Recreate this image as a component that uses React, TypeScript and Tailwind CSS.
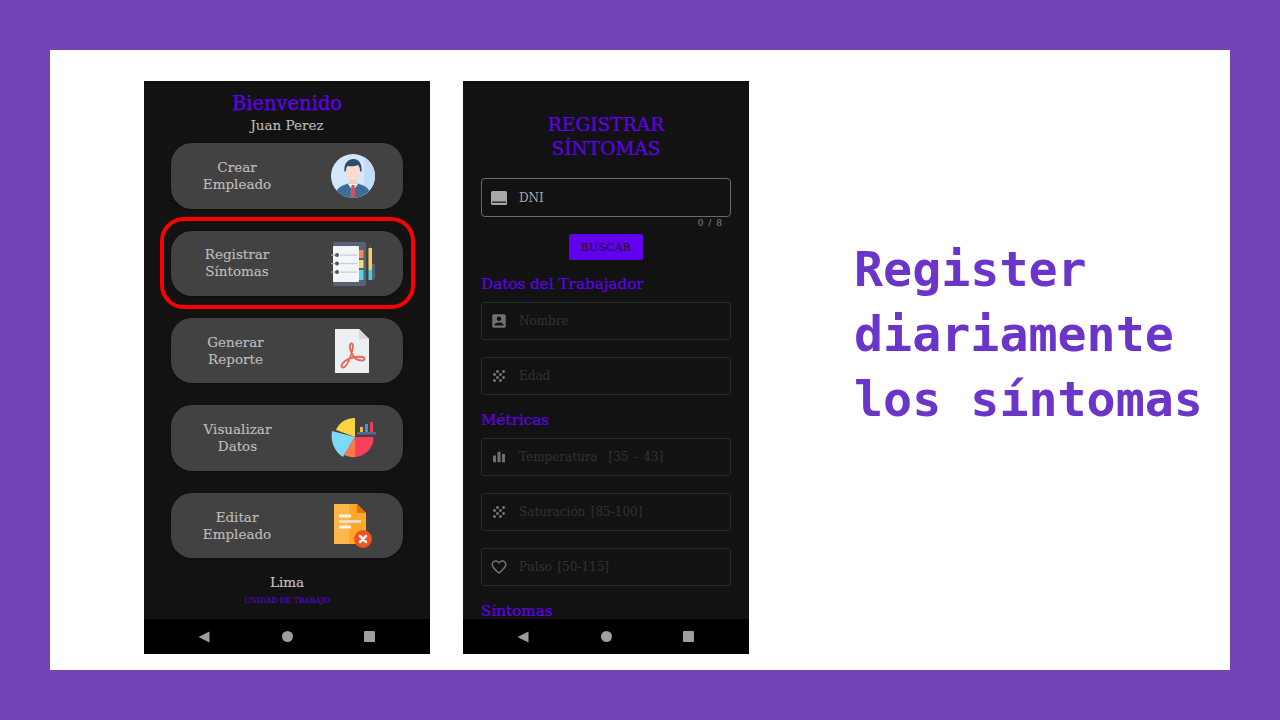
const serif = "font-['DejaVu_Serif','Liberation_Serif',serif]";

function AvatarIcon() {
  return (
    <svg width="46" height="46" viewBox="0 0 46 46">
      <defs>
        <clipPath id="avatar-clip">
          <circle cx="23" cy="23" r="22" />
        </clipPath>
      </defs>
      <circle cx="23" cy="23" r="22" fill="#d3e6fb" />
      <g clipPath="url(#avatar-clip)">
        <path d="M34 3a22 22 0 0 1 0 40z" fill="#c2dbf6" />
        <path d="M5 46c0-10 5-13 12-15l6-2 6 2c7 2 12 5 12 15z" fill="#3f6d9a" />
        <path d="M18 31l5-3 5 3-5 7z" fill="#f4f6f8" />
        <path d="M21.500 32h3l1 10-2.500 4-2.500-4z" fill="#d9505f" />
        <rect x="19.500" y="23" width="7" height="8" fill="#f6cdbb" />
        <path d="M15.500 15c0-5 3-8 7.500-8s7.500 3 7.500 8v4c0 5-4 8-7.500 8s-7.500-3-7.500-8z" fill="#fcdcd0" />
        <path d="M14.500 19c-1-8 3-13 9-13 5 0 9 4 8 13l-1.500-1c0-3-1-5-2-6-3 1.500-7 1.500-10.500 1-1 1-1.500 3-1.500 5z" fill="#2b4d6e" />
      </g>
    </svg>
  );
}

function NotebookIcon() {
  return (
    <svg width="46" height="48" viewBox="0 0 46 48">
      <rect x="3" y="3" width="33" height="44" rx="2" fill="#566377" />
      <rect x="29" y="11" width="4.500" height="8" fill="#f28a5a" />
      <rect x="29" y="21" width="4.500" height="8" fill="#f7d774" />
      <rect x="29" y="31" width="4.500" height="10" fill="#4fd7e0" />
      <rect x="3" y="7" width="26" height="36" rx="1" fill="#f3f6f9" />
      {[16, 24.5, 33].map((y) => (
        <g key={y}>
          <rect x="1" y={y - 0.5} width="6" height="1.200" fill="#aab2bd" />
          <circle cx="7" cy={y} r="2" fill="#4b596d" />
          <rect x="10" y={y - 0.5} width="17" height="1.200" fill="#c5ccd6" />
        </g>
      ))}
      <rect x="39.500" y="6" width="1.500" height="3" fill="#4b596d" />
      <rect x="38.500" y="9" width="3.500" height="22" fill="#f7ce62" />
      <rect x="38.500" y="31" width="3.500" height="10" fill="#45cfd8" />
      <path d="M42 25h3v13a3 3 0 0 1-3 3z" fill="#566377" />
    </svg>
  );
}

function PdfIcon() {
  return (
    <svg width="36" height="46" viewBox="0 0 36 46" className="-ml-[2px]">
      <path d="M1 1h24l10 10v34H1z" fill="#ecf0f3" />
      <path d="M25 1l10 10H25z" fill="#d5d8dd" />
      <path
        d="M17.500 15.500C15 15.500 15.500 21 18 26c2 4 6 6.500 10 6.500 3 0 3.500-3 .5-3.500-5.500-1-13.500 1-17.500 4-4 3-4.500 6.500-2 6.500 3 0 6-6.500 8-12.500 2-6 3-11.500 .5-11.500z"
        fill="none"
        stroke="#e8675c"
        strokeWidth="1.800"
      />
    </svg>
  );
}

function PieIcon() {
  return (
    <svg width="46" height="42" viewBox="0 0 46 42">
      <path d="M25 20V1A19.500 19.500 0 0 0 6 13z" fill="#fbd341" />
      <path d="M2 14l23 6-12 20C5 35 0 25 2 14z" fill="#7ed8f8" />
      <path d="M25 20l-11 18a19.500 19.500 0 0 0 11 2z" fill="#fb7c45" />
      <path d="M25 20h18.500A19.500 19.500 0 0 1 25 40z" fill="#fb3e5c" />
      <rect x="27" y="15" width="19" height="2.500" fill="#566892" />
      <rect x="30" y="10" width="3" height="5" fill="#f2b53c" />
      <rect x="35" y="7" width="3" height="8" fill="#4a90e2" />
      <rect x="40" y="5" width="3" height="10" fill="#e9425f" />
    </svg>
  );
}

function DocIcon() {
  return (
    <svg width="40" height="46" viewBox="0 0 40 46">
      <path d="M1 1h23l9 9v31H1z" fill="#ffa726" />
      <path d="M1 1h15v40H1z" fill="#ffb74d" />
      <path d="M24 1l9 9h-9z" fill="#e8710a" />
      <rect x="6" y="11.500" width="12" height="3" fill="#fff3e0" />
      <rect x="6" y="17" width="22" height="3" fill="#e6ddd0" />
      <rect x="6" y="22.500" width="12" height="3" fill="#fff3e0" />
      <circle cx="30" cy="36" r="9" fill="#f4511e" />
      <path d="M27 33l6 6M33 33l-6 6" stroke="#fff" strokeWidth="2.500" strokeLinecap="round" />
    </svg>
  );
}

const menu = [
  { top: "Crear", bottom: "Empleado", icon: <AvatarIcon />, label: "w-[132px]" },
  { top: "Registrar", bottom: "Síntomas", icon: <NotebookIcon />, label: "w-[132px]" },
  { top: "Generar", bottom: "Reporte", icon: <PdfIcon />, label: "w-[129px] mr-[3px]" },
  { top: "Visualizar", bottom: "Datos", icon: <PieIcon />, label: "w-[133px] -mr-[1px]" },
  { top: "Editar", bottom: "Empleado", icon: <DocIcon />, label: "w-[132px]" },
];

function NavBar() {
  return (
    <div className="flex h-[35px] shrink-0 items-center justify-between bg-black pl-[54px] pr-[55px]">
      <svg width="12" height="12" viewBox="0 0 12 12">
        <path d="M11.500 .5v11L.5 6z" fill="#9e9e9e" />
      </svg>
      <div className="h-[11px] w-[11px] rounded-full bg-[#9e9e9e]" />
      <div className="h-[11px] w-[11px] rounded-[1px] bg-[#9e9e9e]" />
    </div>
  );
}

function HomePhone() {
  return (
    <div className={`flex h-[573px] w-[286px] flex-col bg-[#121212] ${serif}`}>
      <div className="relative flex min-h-0 flex-1 flex-col items-center">
        <h1 className="mt-[10px] text-[19.500px] leading-[25px] text-[#6200ee] [-webkit-text-stroke:0.25px_#6200ee]">
          Bienvenido
        </h1>
        <p className="text-[13.500px] leading-[18px] text-[#b9b9b9] [-webkit-text-stroke:0.15px_#b9b9b9]">Juan Perez</p>
        <div className="mt-[9.300px] flex flex-col gap-[22px]">
          {menu.map((m) => (
            <div
              key={m.top}
              className="flex h-[65.400px] w-[232px] items-center rounded-[21px] bg-[#424242] shadow-[0_1px_2px_rgba(0,0,0,0.4)]"
            >
              <div
                className={`${m.label} text-center text-[13.500px] leading-[17px] text-[#bdbdbd] [-webkit-text-stroke:0.15px_#bdbdbd]`}
              >
                {m.top}
                <br />
                {m.bottom}
              </div>
              <div className="flex w-[100px] justify-center">{m.icon}</div>
            </div>
          ))}
        </div>
        <p className="mt-[15px] text-[13.500px] leading-[18px] text-[#c4c4c4] [-webkit-text-stroke:0.15px_#c4c4c4]">Lima</p>
        <p className="mt-[4px] text-[7.500px] leading-[12px] text-[#6200ee]">UNIDAD DE TRABAJO</p>
        <div className="absolute left-[16px] top-[136px] h-[92px] w-[255px] rounded-[24px] border-4 border-[#ff0000]" />
      </div>
      <NavBar />
    </div>
  );
}

function IdIcon() {
  return (
    <svg width="18" height="18" viewBox="0 0 18 18">
      <rect x="1" y="2" width="16" height="14" rx="1.500" fill="#a8a8a8" />
      <rect x="2" y="12.500" width="14" height="1.300" fill="#1c1c1c" />
    </svg>
  );
}

function MdIcon({ d }: { d: string }) {
  return (
    <svg width="18" height="18" viewBox="0 0 24 24" fill="#707070">
      <path d={d} />
    </svg>
  );
}

const accountBox =
  "M3 5v14c0 1.100.890 2 2 2h14c1.100 0 2-.900 2-2V5c0-1.100-.900-2-2-2H5c-1.110 0-2 .900-2 2zm12 4c0 1.660-1.340 3-3 3s-3-1.340-3-3 1.340-3 3-3 3 1.340 3 3zm-9 8c0-2 4-3.100 6-3.100s6 1.100 6 3.100v1H6v-1z";
const grain =
  "M10 12c-1.100 0-2 .900-2 2s.900 2 2 2 2-.900 2-2-.900-2-2-2zM6 8c-1.100 0-2 .900-2 2s.900 2 2 2 2-.900 2-2-.900-2-2-2zm0 8c-1.100 0-2 .900-2 2s.900 2 2 2 2-.900 2-2-.900-2-2-2zm12-8c1.100 0 2-.900 2-2s-.900-2-2-2-2 .900-2 2 .900 2 2 2zm-4 8c-1.100 0-2 .900-2 2s.900 2 2 2 2-.900 2-2-.900-2-2-2zm4-4c-1.100 0-2 .900-2 2s.900 2 2 2 2-.900 2-2-.900-2-2-2zm-4-4c-1.100 0-2 .900-2 2s.900 2 2 2 2-.900 2-2-.900-2-2-2zm-4-4c-1.100 0-2 .900-2 2s.900 2 2 2 2-.900 2-2-.900-2-2-2z";
const bars = "M4 10h4v9H4zM10 5h4v14h-4zM16 8h4v11h-4z";
const heart =
  "M16.500 3c-1.740 0-3.410.810-4.500 2.090C10.910 3.810 9.240 3 7.500 3 4.420 3 2 5.420 2 8.500c0 3.780 3.400 6.860 8.550 11.540L12 21.350l1.450-1.320C18.600 15.360 22 12.280 22 8.500 22 5.420 19.580 3 16.500 3zm-4.400 15.550l-.100.100-.100-.100C7.140 14.240 4 11.390 4 8.500 4 6.500 5.500 5 7.500 5c1.540 0 3.040.990 3.570 2.360h1.870C13.460 5.990 14.960 5 16.500 5c2 0 3.500 1.500 3.500 3.500 0 2.890-3.140 5.740-7.900 10.050z";

function Field({ icon, label }: { icon: string; label: string }) {
  return (
    <div className="flex h-[38px] items-center rounded-[3px] border border-[#2a2a2a] pl-[8px]">
      <MdIcon d={icon} />
      <span className="ml-[11px] whitespace-pre text-[12px] text-[#333333] [word-spacing:1.600px]">{label}</span>
    </div>
  );
}

function SectionTitle({ children }: { children: string }) {
  return (
    <h2 className="text-[15.200px] leading-[20px] text-[#6200ee] [-webkit-text-stroke:0.2px_#6200ee]">{children}</h2>
  );
}

function FormPhone() {
  return (
    <div className={`flex h-[573px] w-[286px] flex-col bg-[#121212] ${serif}`}>
      <div className="min-h-0 flex-1 overflow-hidden px-[18px]">
        <h1 className="mt-[32px] text-center text-[18.600px] leading-[23.500px] text-[#6200ee] [-webkit-text-stroke:0.2px_#6200ee]">
          REGISTRAR
          <br />
          SÍNTOMAS
        </h1>
        <div className="mt-[18px] flex h-[39px] items-center rounded-[4px] border border-[#6a6a6a] pl-[8px]">
          <IdIcon />
          <span className="ml-[11px] text-[12px] text-[#a8a8a8]">DNI</span>
        </div>
        <p className="pr-[8px] text-right text-[9px] leading-[12px] tracking-[1px] text-[#8a8a8a]">0 / 8</p>
        <div className="mt-[5px] flex justify-center">
          <button className="h-[26px] w-[74px] rounded-[2px] bg-[#6200ee] pt-[1px] text-[10.500px] tracking-[0.500px] text-[#121212]">
            BUSCAR
          </button>
        </div>
        <div className="mt-[14px]">
          <SectionTitle>Datos del Trabajador</SectionTitle>
        </div>
        <div className="mt-[8px] flex flex-col gap-[17px]">
          <Field icon={accountBox} label="Nombre" />
          <Field icon={grain} label="Edad" />
        </div>
        <div className="mt-[15px]">
          <SectionTitle>Métricas</SectionTitle>
        </div>
        <div className="mt-[8px] flex flex-col gap-[17px]">
          <Field icon={bars} label="Temperatura  [35 - 43]" />
          <Field icon={grain} label="Saturación [85-100]" />
          <Field icon={heart} label="Pulso [50-115]" />
        </div>
        <div className="mt-[15px]">
          <SectionTitle>Síntomas</SectionTitle>
        </div>
      </div>
      <NavBar />
    </div>
  );
}

export default function App() {
  return (
    <div className="h-[720px] w-[1280px] bg-[#7145b5] p-[50px]">
      <div className="flex h-[620px] bg-white pl-[94px] pt-[31px]">
        <HomePhone />
        <div className="ml-[33px]">
          <FormPhone />
        </div>
        <div className="ml-[105px] mt-[156px] whitespace-nowrap font-['DejaVu_Sans_Mono','Liberation_Mono',monospace] text-[48.300px] font-bold leading-[65px] text-[#6c35c9]">
          Register
          <br />
          diariamente
          <br />
          los síntomas
        </div>
      </div>
    </div>
  );
}
